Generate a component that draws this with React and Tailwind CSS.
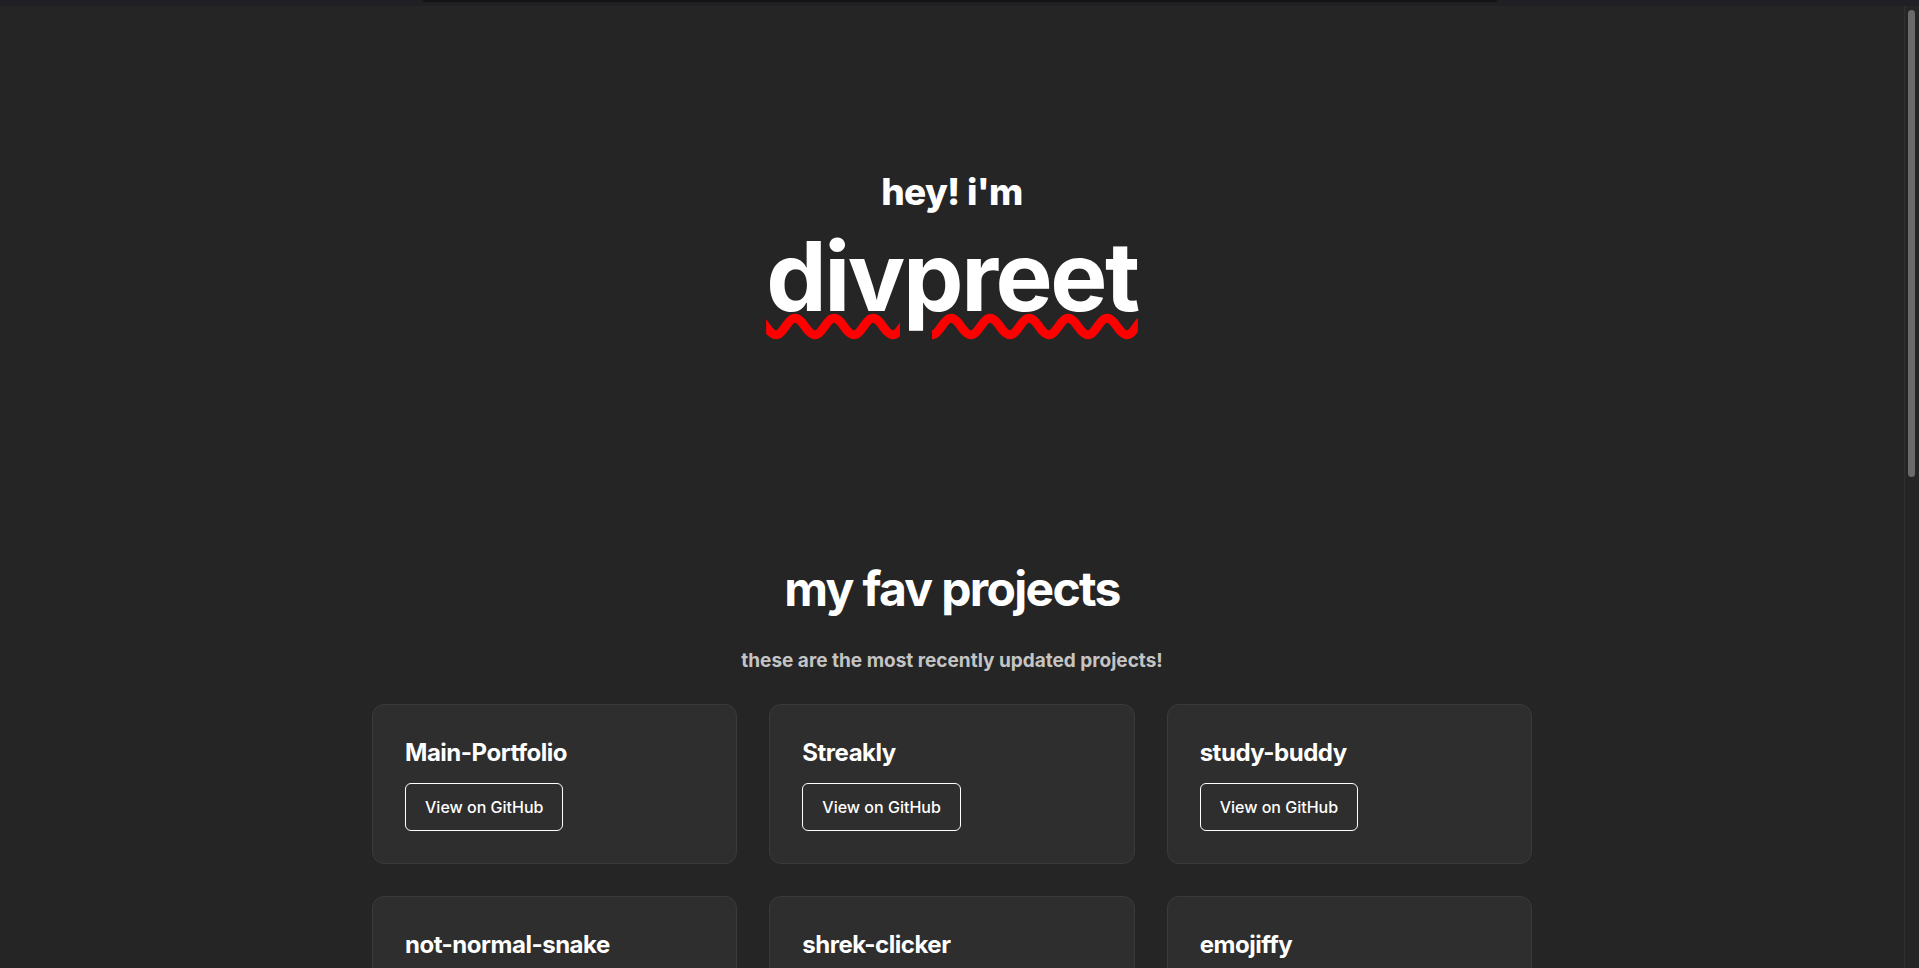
import React from 'react';

const projects = [
    'Main-Portfolio',
    'Streakly',
    'study-buddy',
    'not-normal-snake',
    'shrek-clicker',
    'emojiffy',
];

function ProjectCard({ name }) {
    return (
        <div className="flex flex-col items-start p-8 bg-[#2e2e2e] border border-[#3a3a3a] rounded-xl">
            <h3 className="text-2xl font-bold tracking-[-0.02em] text-white">{name}</h3>
            <button className="mt-3.5 px-[19px] py-[11px] border border-white rounded-md text-base font-medium text-white">
                View on GitHub
            </button>
        </div>
    );
}

export default function App() {
    return (
        <div className="h-screen flex flex-col overflow-hidden bg-[#252525] font-['Inter','Noto_Sans',sans-serif]">
            {/* top strip */}
            <div className="h-[6px] shrink-0 flex justify-center bg-[#1f1f24]">
                <div className="w-[1074px] h-[2px] bg-[#131316] rounded-b"></div>
            </div>

            <div className="flex flex-1 min-h-0">
                <main className="flex-1 overflow-hidden">
                    {/* Hero */}
                    <section className="flex flex-col items-center pt-[162px]">
                        <p className="text-[37px] leading-[48px] font-extrabold tracking-[-0.02em] text-white">hey! i'm</p>
                        <h1 className="mt-3 text-8xl font-bold tracking-tight text-white underline decoration-wavy decoration-[#ff0000] decoration-[9px] underline-offset-[5px]">
                            divpreet
                        </h1>
                    </section>

                    {/* Projects */}
                    <section className="flex flex-col items-center mt-[241px]">
                        <h2 className="text-5xl font-bold tracking-[-0.035em] text-white">my fav projects</h2>
                        <p className="mt-[34px] text-[19px] leading-7 font-bold text-[#c4c4c4]">these are the most recently updated projects!</p>
                        <div className="mt-[29px] w-[1160px] grid grid-cols-3 gap-8">
                            {projects.map(p => (
                                <ProjectCard key={p} name={p} />
                            ))}
                        </div>
                    </section>
                </main>

                {/* scrollbar */}
                <div className="w-[15px] shrink-0 border-l border-[#303030] bg-[#252525] pt-[4px] pl-[3px]">
                    <div className="w-[7px] h-[467px] rounded-full bg-[#6a6a6a]"></div>
                </div>
            </div>
        </div>
    );
}
